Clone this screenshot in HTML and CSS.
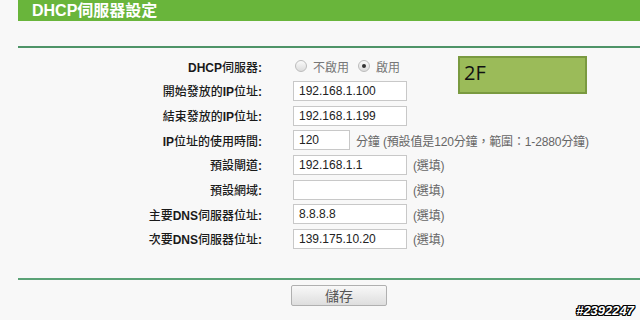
FILE: index.html
```html
<!DOCTYPE html>
<html lang="zh-Hant">
<head>
<meta charset="utf-8">
<title>DHCP伺服器設定</title>
<link rel="stylesheet" href="styles.css">
</head>
<body>
<div class="page">
  <div class="titlebar">DHCP伺服器設定</div>
  <div class="rule top"></div>
  <div class="form">
    <div class="row">
      <div class="label"><span class="en">DHCP</span>伺服器<span class="en">:</span></div>
      <div class="field radios">
        <span class="radio"></span><span class="rtext">不啟用</span>
        <span class="radio on"></span><span class="rtext">啟用</span>
      </div>
    </div>
    <div class="row">
      <div class="label">開始發放的<span class="en">IP</span>位址<span class="en">:</span></div>
      <div class="field"><div class="input">192.168.1.100</div></div>
    </div>
    <div class="row">
      <div class="label">結束發放的<span class="en">IP</span>位址<span class="en">:</span></div>
      <div class="field"><div class="input">192.168.1.199</div></div>
    </div>
    <div class="row">
      <div class="label"><span class="en">IP</span>位址的使用時間<span class="en">:</span></div>
      <div class="field"><div class="input short">120</div><span class="hint">分鐘 (預設值是120分鐘，範圍：1-2880分鐘)</span></div>
    </div>
    <div class="row">
      <div class="label">預設閘道<span class="en">:</span></div>
      <div class="field"><div class="input">192.168.1.1</div><span class="hint">(選填)</span></div>
    </div>
    <div class="row">
      <div class="label">預設網域<span class="en">:</span></div>
      <div class="field"><div class="input"></div><span class="hint">(選填)</span></div>
    </div>
    <div class="row">
      <div class="label">主要<span class="en">DNS</span>伺服器位址<span class="en">:</span></div>
      <div class="field"><div class="input">8.8.8.8</div><span class="hint">(選填)</span></div>
    </div>
    <div class="row">
      <div class="label">次要<span class="en">DNS</span>伺服器位址<span class="en">:</span></div>
      <div class="field"><div class="input">139.175.10.20</div><span class="hint">(選填)</span></div>
    </div>
    <div class="note">2F</div>
  </div>
  <div class="rule bottom"></div>
  <div class="actions"><button class="btn">儲存</button></div>
</div>
<div class="stamp">#2392247</div>
</body>
</html>
```
FILE: styles.css
```css
html, body {
  margin: 0;
  padding: 0;
  background: #f8f8f8;
  width: 640px;
  height: 320px;
  overflow: hidden;
  font-family: "Liberation Sans", Arial, "Noto Sans CJK TC", sans-serif;
  font-size: 12px;
  color: #222;
}
.page {
  margin-left: 18px;
}
.titlebar {
  height: 21px;
  line-height: 21px;
  background: #69b53b;
  color: #fff;
  font-weight: bold;
  font-size: 16px;
  padding-left: 14px;
}
.rule {
  height: 0;
  border-top: 2px solid #4e9468;
}
.rule.top {
  margin-top: 25px;
}
.form {
  position: relative;
  padding-top: 6px;
}
.row {
  display: grid;
  grid-template-columns: 246px 1fr;
  column-gap: 29px;
  height: 24.67px;
  align-items: center;
}
.label {
  text-align: right;
  font-weight: 500;
  color: #1a1a1a;
  padding-right: 2px;
}
.label .en {
  font-weight: bold;
}
.field {
  display: flex;
  align-items: center;
}
.radios {
  color: #777;
  padding-left: 2px;
}
.radio {
  width: 10px;
  height: 10px;
  border-radius: 50%;
  border: 1px solid #bcbcbc;
  background: linear-gradient(#fafafa, #dcdcdc);
  display: inline-block;
  position: relative;
  margin-right: 6px;
}
.radio.on::after {
  content: "";
  position: absolute;
  left: 3px;
  top: 3px;
  width: 4px;
  height: 4px;
  border-radius: 50%;
  background: #333;
}
.rtext {
  margin-right: 9px;
}
.input {
  box-sizing: border-box;
  width: 114px;
  height: 20px;
  line-height: 18px;
  border: 1px solid #c8c8c8;
  background: #fff;
  padding-left: 5px;
  font-size: 12px;
  color: #222;
}
.input.short {
  width: 57px;
}
.hint {
  color: #666;
  margin-left: 6px;
  letter-spacing: -0.15px;
}
.note {
  position: absolute;
  left: 440px;
  top: 8px;
  width: 121px;
  height: 34px;
  background: #9bbb59;
  border: 2px solid #7a9a40;
  color: #111;
  font-family: "Open Sans", "Liberation Sans", sans-serif;
  font-size: 20px;
  line-height: 30px;
  padding-left: 4px;
}
.rule.bottom {
  margin-top: 27px;
  border-top-color: #5aa276;
}
.actions {
  padding-top: 5px;
  padding-left: 273px;
}
.btn {
  width: 96px;
  height: 21px;
  border: 1px solid #b0b0b0;
  border-radius: 2px;
  background: linear-gradient(#f8f8f8, #dedede);
  color: #555;
  font-family: "Liberation Sans", "Noto Sans CJK TC", sans-serif;
  font-size: 14px;
  line-height: 18px;
  padding: 0;
}
.stamp {
  position: absolute;
  right: 6px;
  bottom: 2px;
  color: #fff;
  font-weight: bold;
  font-style: italic;
  font-size: 13px;
  font-family: "Liberation Sans", sans-serif;
  text-shadow: 1px 0 0 #000, -1px 0 0 #000, 0 1px 0 #000, 0 -1px 0 #000, 1px 1px 0 #000, -1px -1px 0 #000, 1px -1px 0 #000, -1px 1px 0 #000;
}
```
